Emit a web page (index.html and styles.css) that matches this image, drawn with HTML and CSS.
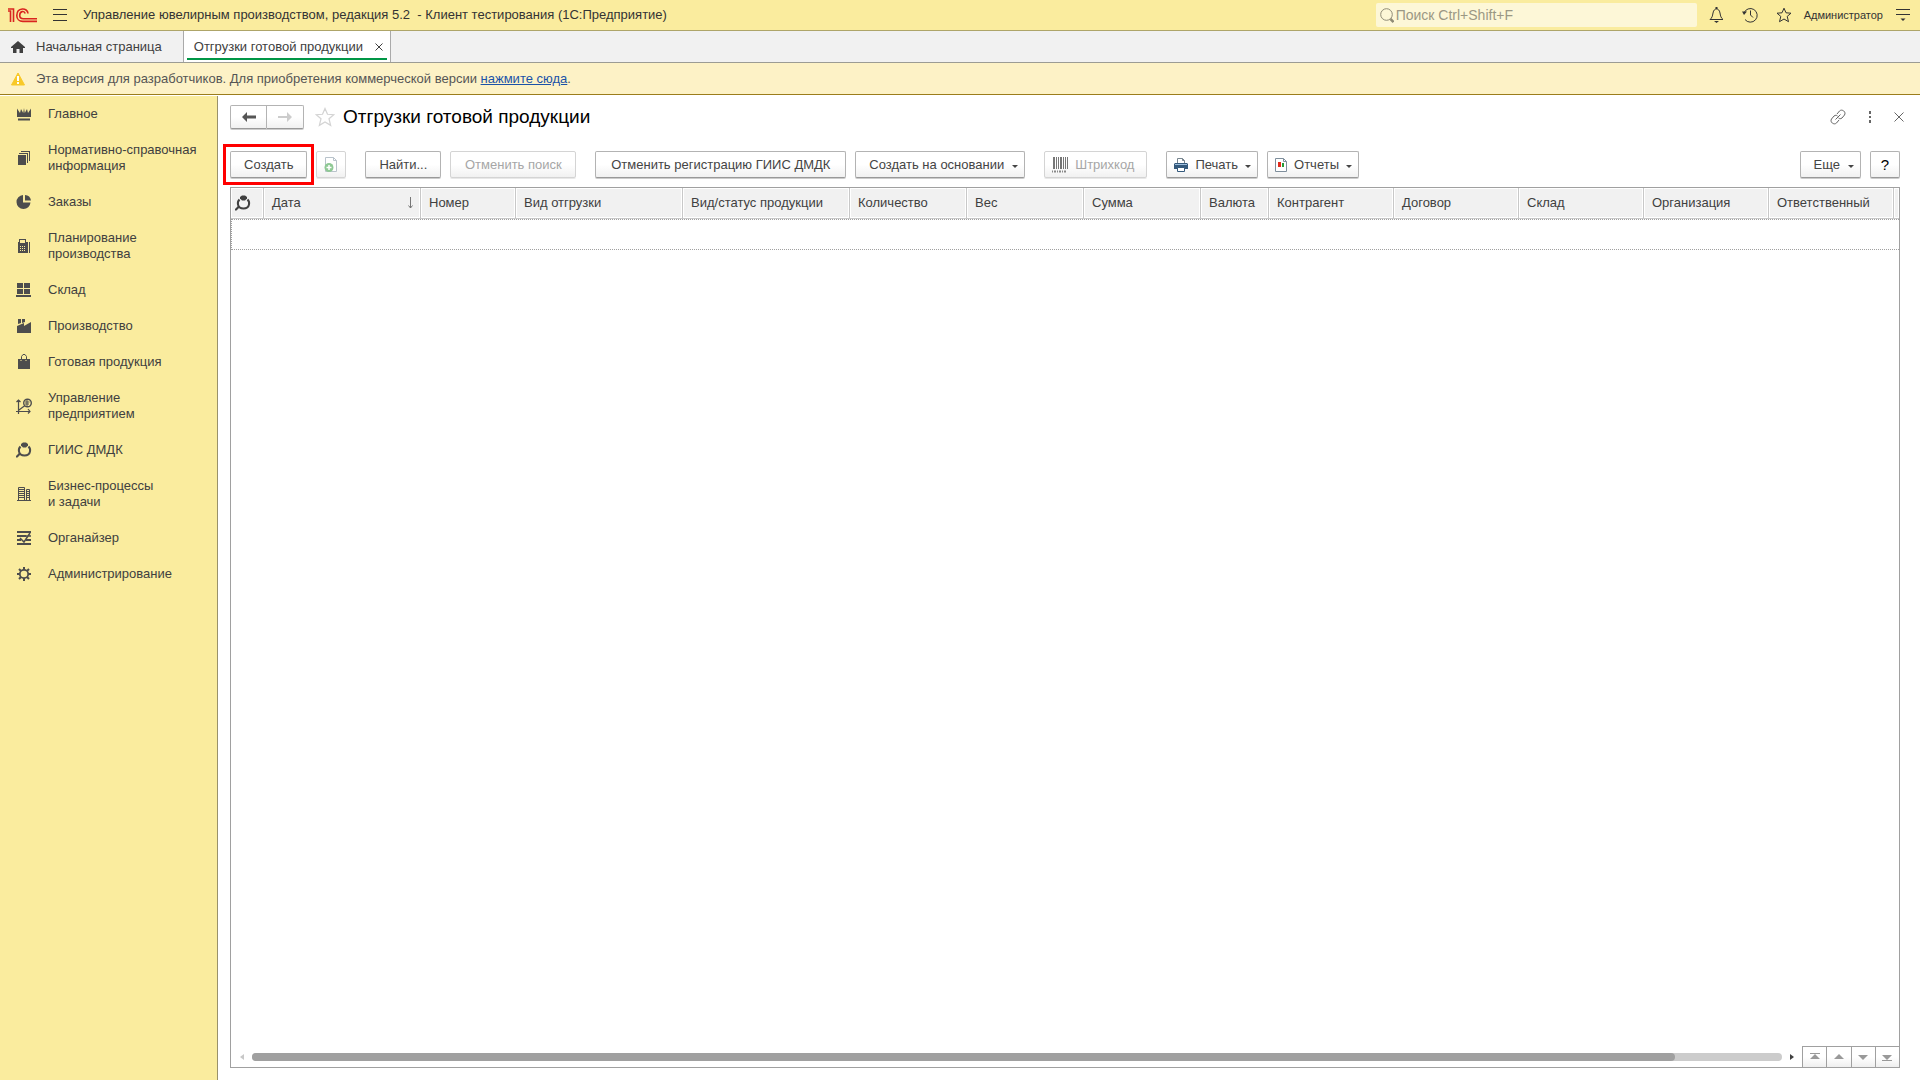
FILE: index.html
```html
<!DOCTYPE html>
<html lang="ru">
<head>
<meta charset="utf-8">
<title>Отгрузки готовой продукции</title>
<link rel="stylesheet" href="styles.css">
</head>
<body>
<svg class="defs" aria-hidden="true">
  <symbol id="i-ring" viewBox="0 0 16 16"><path d="M5 2l2-1.500h3L12 2v1.500L10 5.500H7L5 3.500z"/><path fill="none" stroke="currentColor" stroke-width="2" d="M4.500 4.500C3 6 2.500 7.500 3 9.500 3.500 12 5.500 13.500 8.500 13.500S13.500 12 14 9.500C14.500 7.500 14 6 12.500 4.500"/><path d="M0 14l3-3 1.500 1.500-3 3H0z"/></symbol>
  <symbol id="i-star" viewBox="0 0 16 16"><path fill="none" stroke="currentColor" d="M8 1.200l2 4.600 5 .4-3.800 3.200 1.300 5.300L8 12l-4.500 2.700 1.300-5.300L1 6.200l5-.4z"/></symbol>
</svg>

<header class="topbar">
  <div class="brand">
    <svg class="logo" viewBox="0 0 29 15" role="img" aria-label="1С"><g fill="none" stroke="#d9241f" stroke-width="1.600"><path d="M0 3h2.500v11M0 1h5.500v13M20 5.500C19.500-.8 9-.8 8.800 7.400c0 3.600 2.500 6 6 6H29M17.200 5.500c-1-3-5.400-2.500-5.500 1.700 0 2.500 1.500 3.500 3.600 3.500H29"/></g></svg>
    <button class="icon-btn" aria-label="Меню"><svg width="14" height="12" viewBox="0 0 14 12"><path stroke="currentColor" d="M0 .500h14M0 5.500h14M0 11.500h14"/></svg></button>
    <span>Управление ювелирным производством, редакция 5.2&nbsp; - Клиент тестирования (1С:Предприятие)</span>
  </div>
  <label class="search">
    <svg width="14" height="15" viewBox="0 0 14 15"><g fill="none" stroke="currentColor"><circle cx="6.500" cy="6.500" r="5.800"/><path stroke-width="2.500" d="M10.500 11l3 3"/></g></svg>
    <input type="text" placeholder="Поиск Ctrl+Shift+F" aria-label="Поиск">
  </label>
  <button class="icon-btn" aria-label="Уведомления"><svg width="15" height="16" viewBox="0 0 15 16"><path fill="none" stroke="currentColor" d="M1 12.500c2-1.500 2.500-3.500 3-6.500C4.500 3 6 2 7.500 2S10.500 3 11 6c.5 3 1 5 3 6.500z"/><path fill="currentColor" d="M6.500 0h2v2h-2zM5 14h5l-2.500 2z"/></svg></button>
  <button class="icon-btn" aria-label="История"><svg width="16" height="16" viewBox="0 0 16 16"><path fill="none" stroke="currentColor" d="M3 12.500A6.800 6.800 0 1 0 2 6M8.500 3.500V8l2.500 2.500"/><path fill="currentColor" d="M0 4.500h5L2 8z"/></svg></button>
  <button class="icon-btn" aria-label="Избранное"><svg width="16" height="16"><use href="#i-star"/></svg></button>
  <button class="user">Администратор</button>
  <button class="icon-btn" aria-label="Настройки"><svg width="14" height="14" viewBox="0 0 14 14"><path stroke="currentColor" d="M0 1.500h14M0 6.500h14"/><path fill="currentColor" d="M4.500 10.500h5L7 13z"/></svg></button>
</header>

<nav class="tabs" aria-label="Открытые окна">
  <a class="tab home" href="#"><svg width="16" height="14" viewBox="0 0 16 14"><path d="M8 1l7 6v1h-2v5H9.500V9h-3v4H3V8H1V7z"/></svg>Начальная страница</a>
  <div class="tab active"><a href="#">Отгрузки готовой продукции</a><button class="close" aria-label="Закрыть вкладку"><svg width="8" height="8" viewBox="0 0 8 8"><path stroke="currentColor" d="M.5 .5l7 7M7.500 .5l-7 7"/></svg></button></div>
</nav>

<div class="notice">
  <svg width="16" height="14" viewBox="0 0 16 14"><path fill="#f8c928" stroke="#f8c928" stroke-linejoin="round" d="M8 1l6.500 12h-13z"/><path fill="#fff" d="M7 4h2v5H7zM7 10h2v2H7z"/></svg>
  <span>Эта версия для разработчиков. Для приобретения коммерческой версии <a href="#">нажмите сюда</a>.</span>
</div>

<div class="workspace">
  <nav class="sidebar" aria-label="Разделы">
    <a href="#"><svg viewBox="0 0 16 16"><path d="M1 2.500l3 4.500L5 3l2.200 4L8 2l.8 5L11 3l1 4 3-4.500V11H1zM2 12.500h12v2H2z"/></svg><span>Главное</span></a>
    <a href="#"><svg viewBox="0 0 16 16"><path d="M2 5h8v10H2zM3 3h9v10h-1V4H3zM5 1h9v10h-1V2H5z"/></svg><span>Нормативно-справочная<br>информация</span></a>
    <a href="#"><svg viewBox="0 0 16 16"><path d="M7 1v7.500h7.500A7 7 0 1 1 7 1zM9 1a6.500 6.500 0 0 1 6 5.500H9z"/></svg><span>Заказы</span></a>
    <a href="#"><svg viewBox="0 0 16 16"><path fill-rule="evenodd" d="M3 1h7v3h2v11H2V4h1zM4 2v3h5V2zM4 8h1v1H4zM6 8h1v1H6zM8 8h1v1H8zM4 10h1v1H4zM6 10h1v1H6zM8 10h1v1H8zM4 12h1v1H4zM6 12h1v1H6zM8 12h1v1H8zM13 4h1v11h-1z"/></svg><span>Планирование<br>производства</span></a>
    <a href="#"><svg viewBox="0 0 16 16"><path d="M1 1h6v5H1zM8 1h6v5H8zM1 7h6v5H1zM8 7h6v5H8zM0 13h15v2H0z"/></svg><span>Склад</span></a>
    <a href="#"><svg viewBox="0 0 16 16"><path d="M2 1h3v4L2 6zM6 1h3v3L6 5zM1 8l7-3v3l7-4v11H1z"/></svg><span>Производство</span></a>
    <a href="#"><svg viewBox="0 0 16 16"><path d="M2 5h12v10H2z"/><path fill="none" stroke="currentColor" d="M5.500 6V2.500l1.500-2h2l1.500 2V6"/><path fill="none" stroke="#faec9e" stroke-dasharray="1 1" d="M4.500 6.500h2M9.500 6.500h2"/></svg><span>Готовая продукция</span></a>
    <a href="#"><svg viewBox="0 0 16 16"><g fill="none" stroke="currentColor"><path stroke-width="1.200" d="M2.500 16V2M0 13.500h14M3 12l6-4.500M.500 4l2-2 2 2M12 11l2 2.500-2 2"/><circle cx="11.500" cy="5" r="3.800" stroke-width="1.400"/><path d="M9 4h4.500M9 6h4M11 2v6"/></g></svg><span>Управление<br>предприятием</span></a>
    <a href="#"><svg><use href="#i-ring"/></svg><span>ГИИС ДМДК</span></a>
    <a href="#"><svg viewBox="0 0 16 16"><path fill="none" stroke="currentColor" d="M2.500 15V1.500h6V15M10.500 15V3.500h3V15M1 14.500h14M3 3.500h5M3 5.500h5M3 7.500h5M3 9.500h5M3 11.500h5M10 5.500h3M10 7.500h3M10 9.500h3M10 11.500h3"/></svg><span>Бизнес-процессы<br>и задачи</span></a>
    <a href="#"><svg viewBox="0 0 16 16"><path fill="none" stroke="currentColor" stroke-width="2" d="M1 2h14M1 6h9M1 10h4M10 10h5M1 14h14"/><path fill="none" stroke="currentColor" stroke-width="1.500" d="M14 3l-6 9-4-4M9 6h6"/></svg><span>Органайзер</span></a>
    <a href="#"><svg viewBox="0 0 16 16"><g fill="none" stroke="currentColor"><circle cx="8" cy="8" r="4.200" stroke-width="1.800"/><path stroke-width="2" d="M8 1v3M8 12v3M1 8h3M12 8h3M3 3l2 2M11 11l2 2M13 3l-2 2M5 11l-2 2"/></g></svg><span>Администрирование</span></a>
  </nav>

  <main class="content">
    <div class="form-head">
      <div class="history">
        <button aria-label="Назад"><svg width="14" height="10" viewBox="0 0 14 10"><path d="M0 5l5-5v3.500h9v3H5V10z"/></svg></button>
        <button aria-label="Вперед" disabled><svg width="14" height="10" viewBox="0 0 14 10"><path d="M14 5L9 0v4H0v2h9v4z"/></svg></button>
      </div>
      <button class="icon-btn fav" aria-label="В избранное"><svg width="20" height="20"><use href="#i-star"/></svg></button>
      <h1>Отгрузки готовой продукции</h1>
      <div class="form-tools">
        <button class="icon-btn" aria-label="Ссылка"><svg width="16" height="16" viewBox="0 0 16 16"><path fill="none" stroke="currentColor" d="M7 5l2.500-3c2.500-2.500 7 1 5 4l-2.500 3c-1.500 1-2.500 1-3.500 0M9 11l-2.500 3c-2.500 2.500-7-1-5-4L4 7c1.500-1 2.500-1 3.500 0M5.500 10.500l5-5"/></svg></button>
        <button class="icon-btn" aria-label="Еще действия"><svg width="4" height="12" viewBox="0 0 4 12"><path d="M1 0h2v3H1zM1 5h2v2H1zM1 9h2v3H1z"/></svg></button>
        <button class="icon-btn" aria-label="Закрыть"><svg width="10" height="10" viewBox="0 0 10 10"><path stroke="currentColor" d="M.5 .5l9 9M9.500 .5l-9 9"/></svg></button>
      </div>
    </div>

    <div class="toolbar">
      <div class="group"><button class="btn marked">Создать</button><button class="btn square" disabled aria-label="Скопировать"><svg width="14" height="16" viewBox="0 0 14 16"><path fill="#fff" stroke="#b9c3cb" d="M1.500 .500h8l3 3v11h-11zM9.500 .500v3h3"/><circle cx="5" cy="10.500" r="4.500" fill="#8fc995"/><path stroke="#fff" stroke-width="1.500" d="M5 8v5M2.500 10.500h5"/></svg></button></div>
      <div class="group"><button class="btn">Найти...</button><button class="btn medium" disabled>Отменить поиск</button></div>
      <div class="group"><button class="btn wide">Отменить регистрацию ГИИС ДМДК</button><button class="btn drop">Создать на основании</button></div>
      <div class="group"><button class="btn pic" disabled><svg width="16" height="16" viewBox="0 0 16 16"><path fill="#777" d="M1 0h2v12H1zM4 0h1v12H4zM6 0h1v12H6zM8 0h2v12H8zM11 0h1v12h-1zM13 0h1v12h-1zM15 0h1v12h-1z"/><path stroke="#888" stroke-width="2" stroke-dasharray="1 1 2 1" d="M0 14.500h15"/></svg>Штрихкод</button></div>
      <div class="group"><button class="btn pic drop"><svg width="14" height="14" viewBox="0 0 14 14"><path fill="#fff" stroke="#77858f" d="M3.500 6V.500h5l2 2V6M8.500 .500v2h2"/><path fill="#34597c" d="M1 5h12l1 1v5H0V6z"/><path fill="#9cbddc" d="M1 6h12v1H1z"/><path fill="#fff" stroke="#34597c" d="M3.500 9.500h7v4h-7z"/></svg>Печать</button><button class="btn pic drop"><svg width="12" height="14" viewBox="0 0 12 14"><path fill="#fff" stroke="#7e8e9c" d="M.5 .5h8l3 3v10H.5zM8.500 .5v3h3"/><path fill="#e02b1d" d="M3 4h3v5H3z"/><path fill="#2a9a35" d="M7 5h2v4H7z"/></svg>Отчеты</button></div>
      <div class="group end"><button class="btn drop">Еще</button><button class="btn square help">?</button></div>
    </div>

    <div class="list">
      <table>
        <colgroup><col class="c-flag"><col class="c-date"><col class="c-num"><col class="c-kind"><col class="c-kind"><col class="c-sum"><col class="c-sum"><col class="c-sum"><col class="c-cur"><col class="c-ref"><col class="c-ref"><col class="c-ref"><col class="c-ref"><col class="c-ref"><col class="c-rest"></colgroup>
        <thead><tr>
          <th scope="col" class="flag" aria-label="ГИИС ДМДК"><svg width="16" height="16"><use href="#i-ring"/></svg></th>
          <th scope="col"><div class="sorted">Дата<svg width="5" height="12" viewBox="0 0 5 12"><path stroke="currentColor" fill="none" d="M2.500 0v11M.5 8.500l2 2.500 2-2.500"/></svg></div></th>
          <th scope="col">Номер</th><th scope="col">Вид отгрузки</th><th scope="col">Вид/статус продукции</th><th scope="col">Количество</th><th scope="col">Вес</th><th scope="col">Сумма</th><th scope="col">Валюта</th><th scope="col">Контрагент</th><th scope="col">Договор</th><th scope="col">Склад</th><th scope="col">Организация</th><th scope="col">Ответственный</th><th></th>
        </tr></thead>
        <tbody><tr><td colspan="15"></td></tr></tbody>
      </table>
      <div class="list-foot">
        <div class="scroll"><svg class="off" width="4" height="6" viewBox="0 0 4 6"><path d="M4 0v6L0 3z"/></svg><div class="track"><div class="thumb"></div></div><svg width="4" height="6" viewBox="0 0 4 6"><path d="M0 0v6l4-3z"/></svg></div>
        <div class="pager">
          <button aria-label="В начало"><svg viewBox="0 0 12 8"><path d="M1 0h10v1H1zM6 1l5 5H1z"/></svg></button>
          <button aria-label="Вверх"><svg viewBox="0 0 12 8"><path d="M6 1l5 5H1z"/></svg></button>
          <button aria-label="Вниз"><svg viewBox="0 0 12 8"><path d="M6 7l5-5H1z"/></svg></button>
          <button aria-label="В конец"><svg viewBox="0 0 12 8"><path d="M1 7h10v1H1zM6 7l5-5H1z"/></svg></button>
        </div>
      </div>
    </div>
  </main>
</div>
</body>
</html>
```
FILE: styles.css
```css
* { box-sizing: border-box; }
html, body { height: 100%; }
body {
  margin: 0;
  display: flex;
  flex-direction: column;
  background: #fff;
  color: #404040;
  font: 13px/16px "Liberation Sans", Arial, sans-serif;
}
button, input { font: inherit; color: inherit; }
button { padding: 0; }
svg { display: block; flex: none; fill: currentColor; }
.defs { position: absolute; width: 0; height: 0; }
.icon-btn, .user, .close { border: 0; background: none; display: flex; align-items: center; }

.topbar {
  display: flex;
  align-items: center;
  height: 31px;
  padding: 0 10px 0 8px;
  gap: 18px;
  background: #faec9e;
  border-bottom: 1px solid #aea569;
  color: #333;
}
.brand { flex: 1; display: flex; align-items: center; gap: 16px; white-space: nowrap; }
.logo { width: 29px; height: 15px; }
.search {
  display: flex;
  align-items: center;
  gap: 2px;
  width: 321px;
  height: 24px;
  margin-right: -6px;
  padding-left: 4px;
  border-radius: 2px;
  background: #fdf7d7;
  color: #8f8b76;
}
.search input { flex: 1; min-width: 0; padding: 0; border: 0; background: none; outline: 0; }
.search input { font-size: 14px; }
.search input::placeholder { color: #9b9784; opacity: 1; }
.user { font-size: 11px; margin: 0 -5px 0 -6px; }

.tabs { display: flex; height: 32px; background: #f1f1f1; border-bottom: 1px solid #9c9c94; }
.tab { display: flex; align-items: center; color: #404040; text-decoration: none; white-space: nowrap; }
.tab a { color: inherit; text-decoration: none; }
.home { gap: 10px; padding: 0 21px 0 10px; }
.active {
  gap: 12px;
  padding: 0 7px 0 10px;
  background: linear-gradient(#009646, #009646) center 27px / calc(100% - 6px) 2px no-repeat #fff;
  border: solid #aaa;
  border-width: 0 1px;
}

.notice {
  display: flex;
  align-items: center;
  gap: 10px;
  height: 32px;
  padding-left: 10px;
  background: #fdf2c6;
  border-bottom: 1px solid #9b7d1b;
  color: #555;
}
.notice a { color: #1b52a8; }

.workspace { flex: 1; display: flex; min-height: 0; padding-top: 1px; }
.sidebar { width: 218px; flex: none; background: #faec9e; border-right: 1px solid #99916a; }
.sidebar a {
  display: flex;
  align-items: center;
  gap: 16px;
  padding: 10px 0 10px 16px;
  color: #404040;
  text-decoration: none;
  white-space: nowrap;
}
.sidebar svg { width: 16px; height: 16px; color: #4d4d4d; }

.content { flex: 1; min-width: 0; display: flex; flex-direction: column; padding: 9px 20px 12px 12px; }
.form-head { display: flex; align-items: center; height: 24px; }
.history { display: flex; }
.history button, .btn {
  border: 1px solid #b3b3b3;
  border-bottom-color: #999;
  border-radius: 2px;
  background: linear-gradient(#fff 50%, #f1f1f1);
  box-shadow: 0 1px #ccc;
  color: #444;
}
.history button { display: grid; place-items: center; width: 37px; height: 24px; color: #555; }
.history button:first-child { border-radius: 2px 0 0 2px; }
.history button:last-child { border-left: 0; border-radius: 0 2px 2px 0; }
.history button:disabled { color: #ccc; }
.fav { margin: 0 8px 0 11px; color: #d4d4d4; }
h1 { margin: 0; font-size: 19px; line-height: 24px; font-weight: 400; color: #000; white-space: nowrap; }
.form-tools { display: flex; gap: 22px; margin-left: auto; margin-right: -4px; color: #666; }

.toolbar { display: flex; gap: 19px; margin: 22px 0 9px; }
.group { display: flex; gap: 9px; }
.end { margin-left: auto; }
.btn { display: flex; align-items: center; justify-content: center; height: 27px; padding: 0 13px; white-space: nowrap; }
.btn:disabled { color: #a6a6a6; border-color: #d4d4d4; box-shadow: 0 1px #e8e8e8; }
.marked { position: relative; }
.marked::after { content: ""; position: absolute; inset: -8px; border: 3px solid #f00; }
.medium { min-width: 126px; }
.wide { min-width: 251px; }
.square { width: 30px; padding: 0; }
.pic { gap: 7px; padding: 0 12px 0 7px; }
.drop { padding-right: 6px; }
.drop::after { content: ""; margin: 3px 0 0 8px; border: solid transparent; border-width: 3px 3px 0; border-top-color: #444; }
.pic.drop::after { margin-left: 0; }
.help { font-size: 15px; color: #000; }

.list { flex: 1; display: flex; flex-direction: column; justify-content: space-between; border: 1px solid #a0a0a0; }
table { width: 100%; table-layout: fixed; border-collapse: separate; border-spacing: 0; }
.c-flag { width: 33px; }
.c-date { width: 157px; }
.c-num { width: 95px; }
.c-kind { width: 167px; }
.c-sum { width: 117px; }
.c-cur { width: 68px; }
.c-ref { width: 125px; }
.c-rest { width: 5px; }
th {
  height: 31px;
  padding: 0 7px 0 8px;
  text-align: left;
  font-weight: 400;
  white-space: nowrap;
  background: #f1f1f1;
  border-right: 1px solid #c8c8c8;
  border-bottom: 1px solid #c8c8c8;
  box-shadow: inset 1px 1px #fff, inset -1px -1px #fff;
}
th:last-child { border-right: 0; padding: 0; }
.flag { padding: 0 4px; }
.sorted { display: flex; align-items: center; justify-content: space-between; }
.sorted svg { color: #777; }
td { height: 31px; padding: 0; border: 1px dotted #a0a0a0; border-right: 0; }

.list-foot { display: flex; }
.scroll { flex: 1; display: flex; align-items: center; gap: 8px; padding: 0 8px 0 9px; color: #404040; }
.off { color: #c8c8c8; }
.track { flex: 1; height: 8px; border-radius: 4px; background: #ccc; }
.thumb { width: 93%; height: 8px; border-radius: 4px; background: #a0a0a0; }
.pager { display: flex; width: 97px; }
.pager button {
  flex: 1;
  display: grid;
  place-items: center;
  height: 21px;
  border: solid #a0a0a0;
  border-width: 1px 0 0 1px;
  background: linear-gradient(#fff 50%, #efefef);
  color: #999;
}
.pager svg { width: 12px; height: 8px; }
```
